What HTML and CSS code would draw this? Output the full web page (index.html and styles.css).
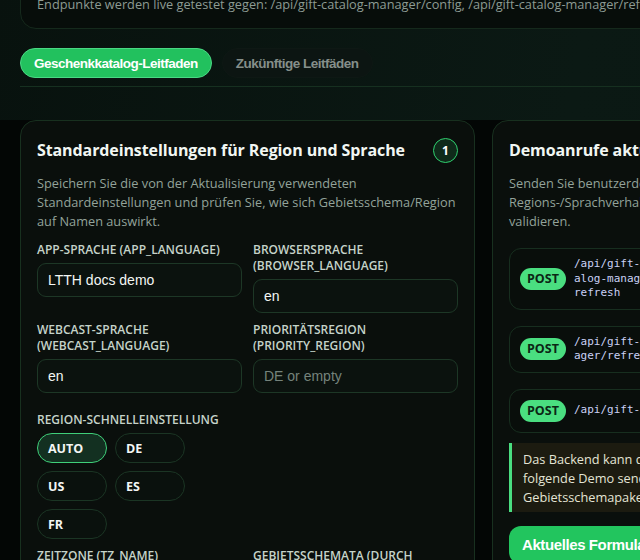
FILE: index.html
```
<!DOCTYPE html>
<html lang="de">
<head>
  <meta charset="UTF-8">
  <meta name="viewport" content="width=device-width, initial-scale=1.0">
  <title>Geschenkkatalog-Leitfaden</title>
  <link rel="stylesheet" href="styles.css">
</head>
<body>
  <div class="hero">
    <section class="intro-card">
      <h2 class="intro-title">Geschenkkatalog-Manager</h2>
      <p class="intro-text">Endpunkte werden live getestet gegen: /api/gift-catalog-manager/config, /api/gift-catalog-manager/refresh</p>
    </section>
    <nav class="guide-tabs">
      <button class="guide-tab active">Geschenkkatalog-Leitfaden</button>
      <button class="guide-tab">Zukünftige Leitfäden</button>
    </nav>
    <div class="tabs-divider"></div>
  </div>

  <main class="guide-panel">
    <section class="card">
      <div class="card-head">
        <h3 class="card-title">Standardeinstellungen für Region und Sprache</h3>
        <span class="step-badge">1</span>
      </div>
      <p class="card-desc">Speichern Sie die von der Aktualisierung verwendeten Standardeinstellungen und prüfen Sie, wie sich Gebietsschema/Region auf Namen auswirkt.</p>
      <div class="form-grid">
        <label class="field">
          <span class="field-label">App-Sprache (APP_LANGUAGE)</span>
          <input class="field-input" type="text" value="LTTH docs demo">
        </label>
        <label class="field">
          <span class="field-label">Browsersprache (BROWSER_LANGUAGE)</span>
          <input class="field-input" type="text" value="en">
        </label>
        <label class="field">
          <span class="field-label">Webcast-Sprache (WEBCAST_LANGUAGE)</span>
          <input class="field-input" type="text" value="en">
        </label>
        <label class="field">
          <span class="field-label">Prioritätsregion (PRIORITY_REGION)</span>
          <input class="field-input" type="text" placeholder="DE or empty">
        </label>
        <div class="field region-field">
          <span class="field-label">Region-Schnelleinstellung</span>
          <div class="region-pills">
            <button class="region-pill active">AUTO</button>
            <button class="region-pill">DE</button>
            <button class="region-pill">US</button>
            <button class="region-pill">ES</button>
            <button class="region-pill">FR</button>
          </div>
        </div>
        <div class="field"></div>
        <label class="field">
          <span class="field-label">Zeitzone (TZ_NAME)</span>
          <input class="field-input" type="text" value="Europe/Berlin">
        </label>
        <label class="field">
          <span class="field-label">Gebietsschemata (durch Komma getrennt)</span>
          <input class="field-input" type="text" value="de-DE, en-US">
        </label>
      </div>
    </section>

    <section class="card">
      <div class="card-head">
        <h3 class="card-title">Demoanrufe aktualisieren</h3>
      </div>
      <p class="card-desc">Senden Sie benutzerdefinierte Demoanrufe, um das Regions-/Sprachverhalten der Aktualisierung mit echten Anfragen zu validieren.</p>
      <div class="endpoint-list">
        <div class="endpoint">
          <span class="method">POST</span>
          <code class="endpoint-path">/api/gift-catalog/catalog-manager/regions-refresh</code>
        </div>
        <div class="endpoint">
          <span class="method">POST</span>
          <code class="endpoint-path">/api/gift-catalog-manager/refresh</code>
        </div>
        <div class="endpoint">
          <span class="method">POST</span>
          <code class="endpoint-path">/api/gift-catalog</code>
        </div>
      </div>
      <div class="notice">Das Backend kann die Region nicht immer erzwingen. Die folgende Demo sendet die aktuellen Werte mit, damit das Gebietsschemapaket geprüft werden kann.</div>
      <button class="primary-btn">Aktuelles Formular senden</button>
    </section>
  </main>
</body>
</html>
```

FILE: styles.css
```
html, body {
  margin: 0;
  padding: 0;
  background: #030605;
  overflow: hidden;
  font-family: 'Open Sans', 'Noto Sans', sans-serif;
  color: #eef4f0;
}
body {
  width: 967px;
}
.hero {
  padding: 0 20px 33px;
  background: linear-gradient(100deg, #08120e 0%, #0b1914 60%, #0a1713 100%);
}
.intro-card {
  margin-top: -54px;
  padding: 16px 16px 14px;
  border: 1px solid #15291c;
  border-radius: 16px;
  background: #070d0a;
}
.intro-title {
  margin: 0 0 8px;
  font-size: 18px;
  line-height: 24px;
}
.intro-text {
  margin: 0;
  font-size: 12.75px;
  line-height: 19px;
  color: #8d9b93;
}
.guide-tabs {
  display: flex;
  gap: 10px;
  margin-top: 19px;
}
.guide-tab {
  height: 30px;
  padding: 0 13px;
  border: 1px solid #0e1814;
  border-radius: 15px;
  background: #0c1512;
  color: #858f8a;
  font-family: 'Liberation Sans', Arial, sans-serif;
  font-size: 13.5px;
  font-weight: bold;
  letter-spacing: -0.5px;
}
.guide-tab.active {
  background: #22c15e;
  border-color: #4ad884;
  color: #fff;
}
.tabs-divider {
  margin-top: 8px;
  height: 1px;
  background: #163020;
}
.guide-panel {
  display: grid;
  grid-template-columns: 455px 455px;
  gap: 17px;
  padding: 0 20px;
  align-items: start;
}
.card {
  padding: 16px;
  border: 1px solid #18301f;
  border-radius: 16px;
  background: #0a0f0c;
}
.card-head {
  display: flex;
  align-items: center;
  justify-content: space-between;
  min-height: 26px;
}
.card-title {
  margin: 0;
  font-size: 16px;
  font-weight: 700;
  color: #f2f7f3;
  letter-spacing: -0.1px;
}
.step-badge {
  width: 23px;
  height: 23px;
  display: flex;
  align-items: center;
  justify-content: center;
  border: 1.5px solid #2fcf6e;
  border-radius: 50%;
  background: #0f2a1a;
  font-size: 12px;
  font-weight: 700;
  color: #fff;
}
.card-desc {
  margin: 11px 0 0;
  font-size: 12.75px;
  line-height: 19px;
  color: #93a39a;
}
.form-grid {
  display: grid;
  grid-template-columns: 205px 205px;
  column-gap: 11px;
  row-gap: 9px;
  margin-top: 11px;
}
.field {
  display: flex;
  flex-direction: column;
  gap: 5px;
}
.field-label {
  font-size: 12px;
  line-height: 16px;
  font-weight: 600;
  text-transform: uppercase;
  color: #c5d3c9;
}
.field-input {
  box-sizing: border-box;
  width: 100%;
  height: 34px;
  padding: 0 10px;
  border: 1px solid #1d3726;
  border-radius: 9px;
  background: #0b120e;
  color: #f3f6f4;
  font-family: 'Liberation Sans', Arial, sans-serif;
  font-size: 14px;
  outline: none;
}
.field-input::placeholder {
  color: #75837b;
}
.region-field {
  margin-top: 10px;
}
.region-pills {
  display: flex;
  flex-wrap: wrap;
  gap: 8px;
}
.region-pill {
  box-sizing: border-box;
  width: 70px;
  height: 30px;
  padding: 0 10px;
  text-align: left;
  border: 1px solid #1b3524;
  border-radius: 15px;
  background: #0a110d;
  color: #f3f6f4;
  font-family: 'Open Sans', sans-serif;
  font-size: 12.5px;
  font-weight: 700;
}
.region-pill.active {
  background: #133021;
  border: 1.5px solid #3fcf79;
}
.endpoint-list {
  display: flex;
  flex-direction: column;
  gap: 16px;
  margin-top: 17px;
}
.endpoint {
  box-sizing: border-box;
  min-height: 44px;
  display: flex;
  align-items: center;
  gap: 8px;
  padding: 8px 10px;
  border: 1px solid #172e1f;
  border-radius: 12px;
  background: #090e0b;
}
.method {
  flex: none;
  height: 22px;
  padding: 0 7px;
  line-height: 22px;
  border-radius: 11px;
  background: #4ade80;
  color: #0b2615;
  font-size: 12.5px;
  font-weight: 700;
}
.endpoint-path {
  width: 21ch;
  word-break: break-all;
  font-family: 'DejaVu Sans Mono', monospace;
  font-size: 11px;
  line-height: 14.5px;
  color: #c9d1f5;
}
.notice {
  margin-top: 10px;
  padding: 7px 12px 5px 11px;
  border-left: 3px solid #4ade80;
  background: #1c1b10;
  font-size: 12.75px;
  line-height: 19px;
  color: #e4e5d5;
}
.primary-btn {
  margin-top: 14px;
  height: 38px;
  padding: 0 13px;
  border: none;
  border-radius: 12px;
  background: #22c55e;
  color: #fff;
  font-family: 'Liberation Sans', Arial, sans-serif;
  font-size: 15px;
  font-weight: bold;
  letter-spacing: -0.4px;
}
```
